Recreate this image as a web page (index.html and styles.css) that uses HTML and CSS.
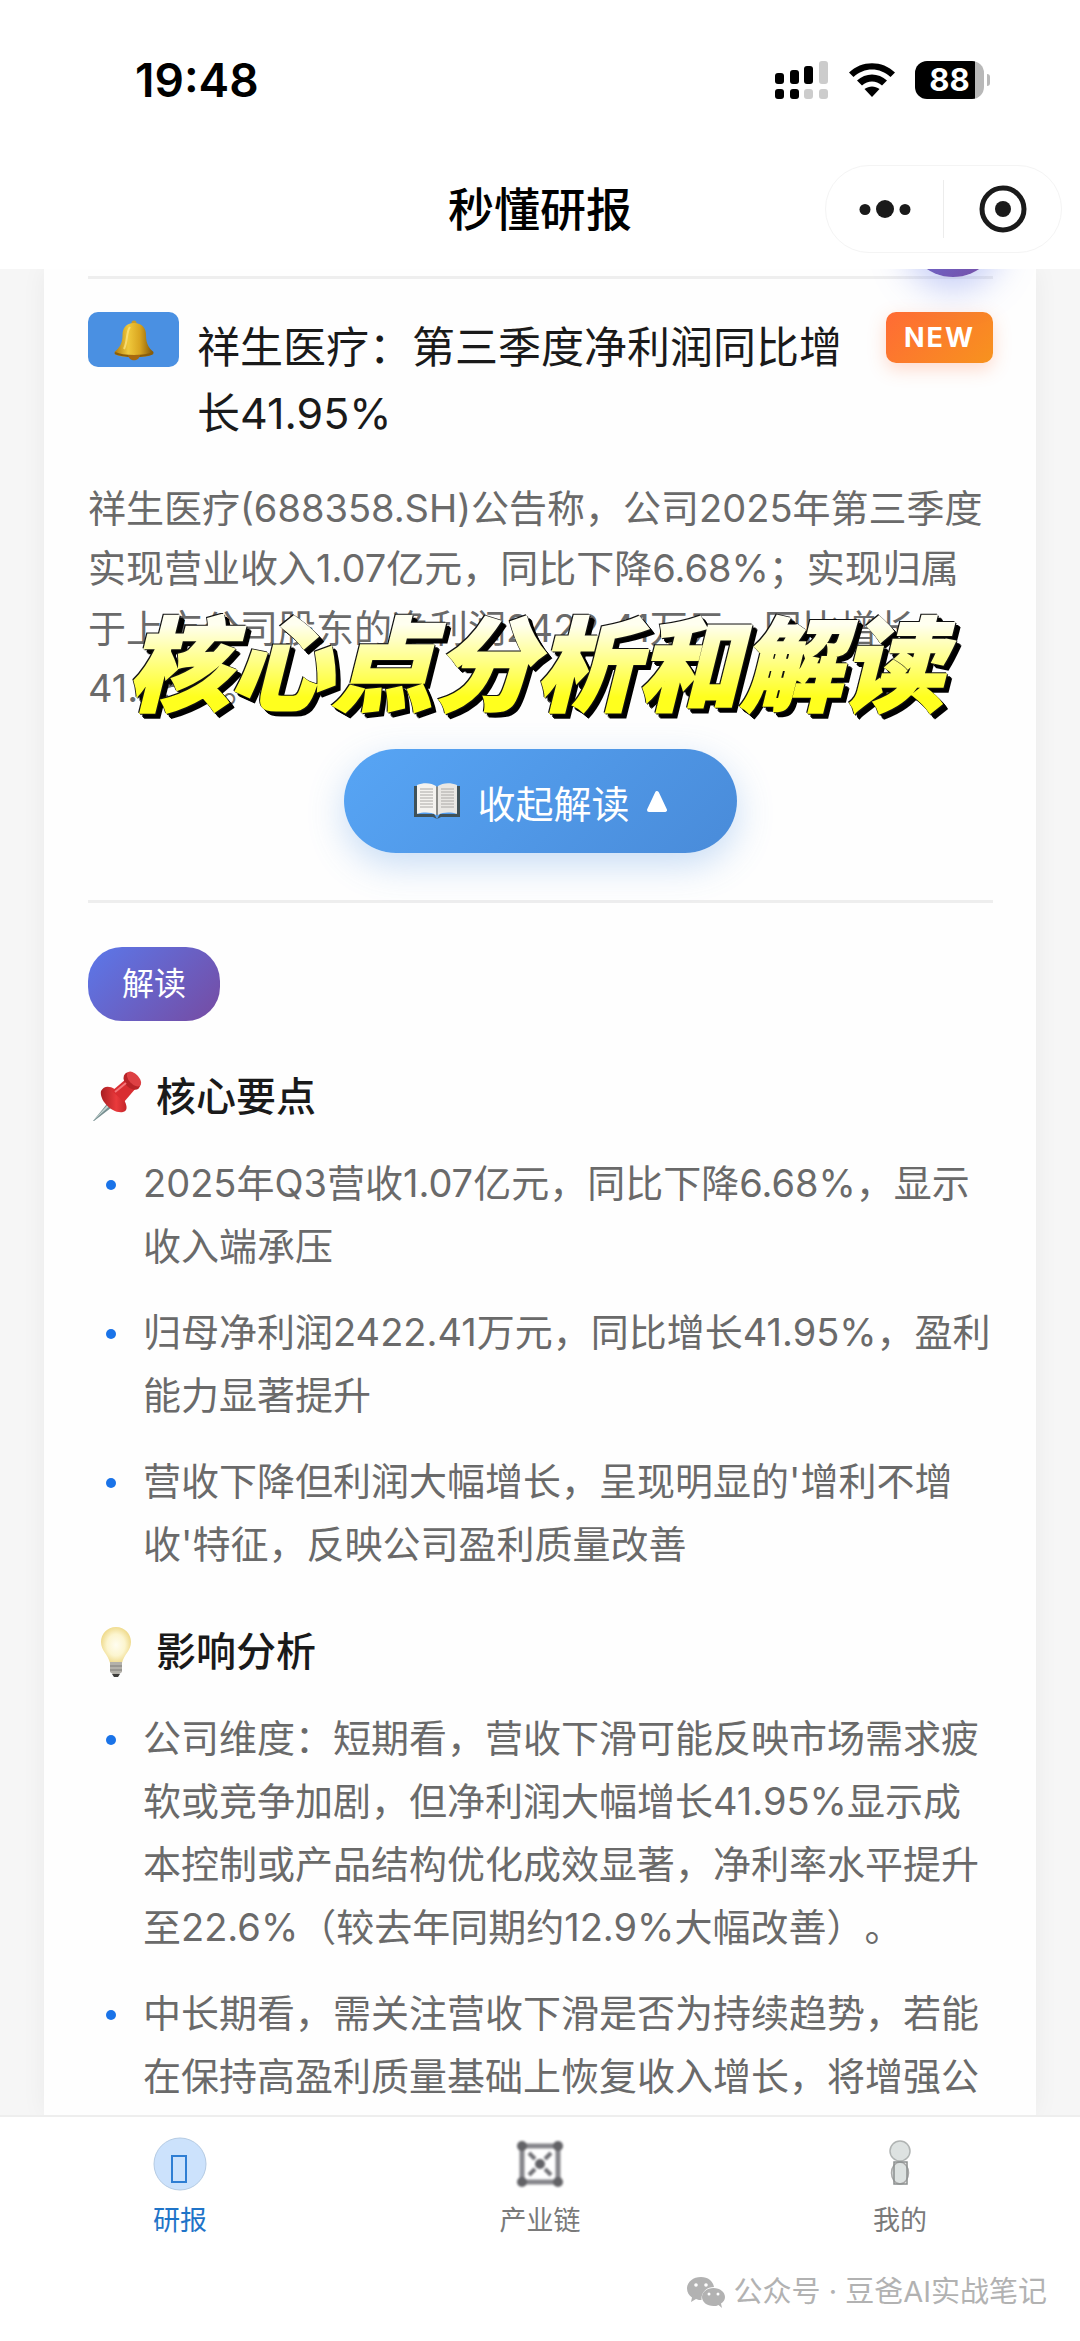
FILE: index.html
```html
<!DOCTYPE html>
<html lang="zh-CN">

<head>
    <meta charset="UTF-8">
    <meta name="viewport" content="width=device-width, initial-scale=1.0">
    <title>秒懂研报</title>
    <link rel="stylesheet" href="styles.css">
</head>

<body>
    <header class="app-header">
        <div class="status-bar">
            <span class="status-time">19:48</span>
            <div class="status-icons">
                <svg class="signal-icon" viewBox="0 0 54 38" width="54" height="38">
                    <g fill="#000">
                        <rect x="0" y="12" width="9" height="11" rx="3" />
                        <rect x="15" y="9" width="9" height="14" rx="3" />
                        <rect x="29" y="5" width="9" height="18" rx="3" />
                        <rect x="0" y="28" width="9" height="10" rx="3" />
                        <rect x="15" y="28" width="9" height="10" rx="3" />
                    </g>
                    <g fill="#ccc">
                        <rect x="44" y="0" width="9" height="23" rx="3" />
                        <rect x="29" y="28" width="9" height="10" rx="3" />
                        <rect x="44" y="28" width="9" height="10" rx="3" />
                    </g>
                </svg>
                <svg class="wifi-icon" viewBox="0 0 46 34" width="46" height="34">
                    <path d="M0 9.5C12.500-3 33.500-3 46 9.500L41.500 14C31 4 15 4 4.500 14Z" />
                    <path d="M8 17.500C16.500 9.500 29.500 9.500 38 17.500L33 22.500C27 17 19 17 13 22.500Z" />
                    <path d="M15.500 26C20 22.500 26 22.500 30.500 26L23 34Z" />
                </svg>
                <div class="battery"><span class="battery-body">88</span><span class="battery-cap"></span></div>
            </div>
        </div>
        <div class="nav-bar">
            <h1 class="nav-title">秒懂研报</h1>
            <div class="capsule">
                <button type="button" class="capsule-btn" aria-label="更多">
                    <svg viewBox="0 0 52 20" width="52" height="20">
                        <circle cx="6" cy="10.500" r="5.500" />
                        <circle cx="26" cy="10" r="9" />
                        <circle cx="46" cy="10.500" r="5.500" />
                    </svg>
                </button>
                <button type="button" class="capsule-btn capsule-close" aria-label="关闭">
                    <svg viewBox="0 0 48 48" width="48" height="48">
                        <circle cx="24" cy="24" r="21" fill="none" stroke="#1a1a1a" stroke-width="5" />
                        <circle cx="24" cy="24" r="8" />
                    </svg>
                </button>
            </div>
        </div>
    </header>

    <main class="content">
        <span class="float-button"></span>
        <div class="card">
            <article class="news-item">
                <div class="news-head">
                    <span class="bell-badge">
                        <svg viewBox="0 0 42 42" width="42" height="42">
                            <defs>
                                <linearGradient id="bellGold" x1="0" x2="1">
                                    <stop offset="0" stop-color="#b07a0c" />
                                    <stop offset="0.35" stop-color="#f0c93c" />
                                    <stop offset="0.65" stop-color="#d9a520" />
                                    <stop offset="1" stop-color="#7d5306" />
                                </linearGradient>
                            </defs>
                            <circle cx="21" cy="4" r="2.500" fill="#c89a26" />
                            <path d="M21 4C13 4 9.500 9 9.500 16C9.500 25 6 29 1.500 33C1 37 9 38 21 38S41 37 40.500 33C36 29 33 25 33 16C33 9 29 4 21 4Z" fill="url(#bellGold)" />
                            <path d="M2 34C10 38 32 38 40 34" fill="none" stroke="#8a5d0a" stroke-width="2" />
                            <path d="M15 36C16 43 26 43 27 36Z" fill="#a8680f" />
                            <path d="M17 8C13 13 15 22 11 30" fill="none" stroke="#ffe887" stroke-width="2" opacity="0.7" />
                        </svg>
                    </span>
                    <h2 class="news-title">祥生医疗：第三季度净利润同比增长41.95%</h2>
                    <span class="new-badge">NEW</span>
                </div>
                <div class="summary">
                    <p class="summary-text">祥生医疗(688358.SH)公告称，公司2025年第三季度实现营业收入1.07亿元，同比下降6.68%；实现归属于上市公司股东的净利润2422.41万元，同比增长41.95%。</p>
                    <div class="caption">核心点分析和解读</div>
                </div>
                <button type="button" class="toggle-button">
                    <svg viewBox="0 0 46 36" width="46" height="36">
                        <path d="M0 3H4V31H20L23 36L26 31H42V3H46V34H27L23 36L19 34H0Z" fill="#3f5158" />
                        <path d="M3 2C10-1 18 0 22 3V32C17 29 9 29 3 31Z" fill="#f5f3ef" />
                        <path d="M43 2C36-1 28 0 24 3V32C29 29 37 29 43 31Z" fill="#e9e7e3" />
                        <path d="M22 3L23 4L24 3V32H22Z" fill="#8c8c88" />
                        <g stroke="#aaa8a5" stroke-width="1">
                            <path d="M6 6H19M6 9H19M6 12H19M6 15H19M6 18H19M6 21H19M6 24H19M27 6H40M27 9H40M27 12H40M27 15H40M27 18H40M27 21H40M27 24H40" />
                        </g>
                    </svg>
                    <span>收起解读</span>
                    <svg class="toggle-arrow" viewBox="0 0 20 22" width="20" height="22">
                        <path d="M10 3L18 20H2Z" fill="#fff" stroke="#fff" stroke-width="4" stroke-linejoin="round" />
                    </svg>
                </button>
            </article>

            <section class="analysis">
                <span class="tag">解读</span>

                <h3 class="section-title">
                    <svg viewBox="0 0 56 56" width="56" height="56">
                        <defs>
                            <linearGradient id="pinRed" x1="0" x2="1">
                                <stop offset="0" stop-color="#a81e22" />
                                <stop offset="0.6" stop-color="#ea3a3c" />
                                <stop offset="1" stop-color="#c4252a" />
                            </linearGradient>
                        </defs>
                        <path d="M5 52L23 30L28 35L6 52Z" fill="#758d8f" />
                        <path d="M5 52L24 31L26 33Z" fill="#c5d5d2" />
                        <path d="M13 22C17 14 27 18 33 26S41 42 35 43C24 45 11 31 13 22Z" fill="url(#pinRed)" />
                        <path d="M24 22L38 10L48 19L36 33Z" fill="#d92d31" />
                        <ellipse cx="44" cy="12" rx="10" ry="7" transform="rotate(48 44 12)" fill="#b82327" />
                        <ellipse cx="46" cy="10" rx="9" ry="5" transform="rotate(48 46 10)" fill="#dd4043" />
                        <path d="M27 23L38 14" stroke="#f4767a" stroke-width="2" />
                    </svg>
                    核心要点
                </h3>
                <ul class="point-list">
                    <li>2025年Q3营收1.07亿元，同比下降6.68%，显示收入端承压</li>
                    <li>归母净利润2422.41万元，同比增长41.95%，盈利能力显著提升</li>
                    <li>营收下降但利润大幅增长，呈现明显的'增利不增收'特征，反映公司盈利质量改善</li>
                </ul>

                <h3 class="section-title">
                    <svg viewBox="0 0 56 56" width="56" height="56">
                        <defs>
                            <radialGradient id="bulbGlow">
                                <stop offset="0" stop-color="#fffdf0" />
                                <stop offset="0.6" stop-color="#fcf5cf" />
                                <stop offset="1" stop-color="#f0dc90" />
                            </radialGradient>
                        </defs>
                        <path d="M28 3C19 3 13 10 13 18C13 27 20 30 22 39H34C36 30 43 27 43 18C43 10 37 3 28 3Z" fill="url(#bulbGlow)" />
                        <path d="M22 38H34V48L30 51H26L22 48Z" fill="#b3b1aa" />
                        <path d="M22 42H34M22 46H34" stroke="#7f7d78" stroke-width="1" />
                        <path d="M24 50H32L30 53H26Z" fill="#3c3c3a" />
                    </svg>
                    影响分析
                </h3>
                <ul class="point-list">
                    <li>公司维度：短期看，营收下滑可能反映市场需求疲软或竞争加剧，但净利润大幅增长41.95%显示成本控制或产品结构优化成效显著，净利率水平提升至22.6%（较去年同期约12.9%大幅改善）。</li>
                    <li>中长期看，需关注营收下滑是否为持续趋势，若能在保持高盈利质量基础上恢复收入增长，将增强公</li>
                </ul>
            </section>
        </div>
    </main>

    <footer class="bottom-bar">
        <nav class="tab-bar">
            <a href="#" class="tab active">
                <svg viewBox="0 0 54 54" width="54" height="54">
                    <circle cx="27" cy="27" r="26" fill="#cce2fc" stroke="#b5cbe3" stroke-width="1" />
                    <rect x="19" y="19" width="14" height="26" fill="none" stroke="#2f7ed3" stroke-width="2" />
                </svg>
                <span>研报</span>
            </a>
            <a href="#" class="tab">
                <svg viewBox="0 0 54 54" width="54" height="54" class="chain-icon">
                    <rect x="9" y="9" width="36" height="36" fill="none" stroke="#85858a" stroke-width="5" />
                    <g fill="#626266">
                        <circle cx="9" cy="9" r="5" />
                        <circle cx="45" cy="9" r="5" />
                        <circle cx="9" cy="45" r="5" />
                        <circle cx="45" cy="45" r="5" />
                        <circle cx="27" cy="27" r="5" />
                    </g>
                    <path d="M16 16L22 22M38 16L32 22M16 38L22 32M38 38L32 32" stroke="#707075" stroke-width="4" />
                </svg>
                <span>产业链</span>
            </a>
            <a href="#" class="tab">
                <svg viewBox="0 0 54 54" width="54" height="54">
                    <circle cx="27" cy="14" r="10" fill="#dde2e1" stroke="#b0b4b3" stroke-width="1.500" />
                    <ellipse cx="27" cy="36" rx="8.500" ry="11" fill="#dde2e1" stroke="#aaa" stroke-width="1.500" />
                    <rect x="21" y="25" width="13" height="22" fill="none" stroke="#8b8f8e" stroke-width="1.500" />
                </svg>
                <span>我的</span>
            </a>
        </nav>
        <div class="account">
            <svg viewBox="0 0 38 31" width="38" height="31">
                <path d="M14 0C6 0 0 5 0 11.500C0 15.500 2 18.500 5 20.500L4 25L9 22C11 23 13 23 14.500 23C14 15 20 10 27 10C26 4 21 0 14 0Z" fill="#b2b2b2" />
                <path d="M26.500 11C20 11 15 15 15 20S20 29 26.500 29C28.500 29 30 29 31.500 28L35 31L34 26.500C36.500 25 38 23 38 20C38 15 33 11 26.500 11Z" fill="#b2b2b2" />
                <g fill="#fff">
                    <circle cx="9" cy="8" r="1.800" />
                    <circle cx="19" cy="8" r="1.800" />
                    <circle cx="22" cy="17" r="1.500" />
                    <circle cx="31" cy="17" r="1.500" />
                </g>
            </svg>
            <span>公众号 · 豆爸AI实战笔记</span>
        </div>
    </footer>
</body>

</html>
```
FILE: styles.css
```css
:root {
    --ink: #1a1a1a;
    --text: #6a6a6a;
    --line: #eeeeee;
    --blue: #1a73e8;
    --page: #f6f6f6;
}

* {
    margin: 0;
    padding: 0;
    box-sizing: border-box;
}

body {
    display: flex;
    flex-direction: column;
    height: 100vh;
    background: var(--page);
    color: var(--text);
    font-family: Inter, 'Noto Sans CJK SC', sans-serif;
    text-spacing-trim: space-all;
    overflow: hidden;
}

svg {
    display: block;
    flex-shrink: 0;
}

button {
    font-family: inherit;
    border: none;
    background: none;
    cursor: pointer;
}

/* Status bar and title */
.app-header {
    flex-shrink: 0;
    background: #fff;
    padding-bottom: 16px;
}

.status-bar {
    display: flex;
    justify-content: space-between;
    align-items: center;
    height: 165px;
    padding: 0 90px 5px 135px;
}

.status-time {
    color: #000;
    font-size: 46px;
    font-weight: 600;
}

.status-icons {
    display: flex;
    align-items: center;
    gap: 20px;
}

.battery {
    display: flex;
    align-items: center;
    gap: 3px;
}

.battery-body {
    width: 69px;
    height: 38px;
    border-radius: 12px;
    background: linear-gradient(to right, #000 60px, #b8b8b8 60px);
    color: #fff;
    font-size: 31px;
    font-weight: 700;
    line-height: 38px;
    text-align: center;
}

.battery-cap {
    width: 3px;
    height: 12px;
    border-radius: 0 3px 3px 0;
    background: #b8b8b8;
}

.nav-bar {
    display: grid;
    grid-template-columns: 1fr auto 1fr;
    align-items: center;
    height: 88px;
    padding: 0 18px;
}

.nav-title {
    grid-column: 2;
    color: #000;
    font-size: 46px;
    font-weight: 500;
    line-height: 60px;
}

.capsule {
    justify-self: end;
    display: flex;
    align-items: center;
    width: 237px;
    height: 88px;
    border: 1px solid #f4f4f4;
    border-radius: 44px;
}

.capsule-btn {
    flex: 1;
    display: flex;
    align-items: center;
    justify-content: center;
    height: 58px;
    fill: var(--ink);
}

.capsule-close {
    border-left: 1px solid #ececec;
}

/* Scrolling card */
.content {
    position: relative;
    flex: 1;
    min-height: 0;
    display: flex;
    padding: 0 44px;
    overflow: hidden;
}

.float-button {
    position: absolute;
    z-index: 1;
    top: -86px;
    right: 80px;
    width: 94px;
    height: 94px;
    border-radius: 50%;
    background: linear-gradient(135deg, #667eea, #764ba2);
    box-shadow: 0 12px 36px rgba(102, 126, 234, 0.4);
}

.card {
    flex: 1;
    min-width: 0;
    padding: 7px 43px 0 44px;
    background: #fefefe;
    box-shadow: 0 0 24px rgba(0, 0, 0, 0.05);
}

.news-item {
    display: flex;
    flex-direction: column;
    padding-bottom: 47px;
    border-top: 3px solid var(--line);
    border-bottom: 3px solid var(--line);
}

.news-head {
    display: flex;
    align-items: flex-start;
    gap: 18px;
    padding-top: 33px;
}

.bell-badge {
    display: flex;
    align-items: center;
    justify-content: center;
    width: 91px;
    height: 55px;
    border-radius: 10px;
    background: #4a90e2;
}

.news-title {
    flex: 1;
    padding-top: 2px;
    color: var(--ink);
    font-size: 43px;
    font-weight: 400;
    line-height: 66px;
}

.new-badge {
    padding: 0 18px;
    border-radius: 10px;
    background: linear-gradient(135deg, #ff6b35, #f7931e);
    box-shadow: 0 6px 18px rgba(255, 107, 53, 0.25);
    color: #fff;
    font-size: 27px;
    font-weight: 700;
    line-height: 51px;
    letter-spacing: 2px;
}

.summary {
    position: relative;
    margin-top: 32px;
}

.summary-text {
    font-size: 38px;
    line-height: 60px;
}

/* Highlight caption laid over the summary */
.caption {
    position: absolute;
    left: 50%;
    bottom: 0;
    transform: translateX(-50%);
    padding: 0 22px 0 12px;
    white-space: nowrap;
    font-size: 102px;
    font-style: italic;
    font-weight: 900;
    line-height: 104px;
    color: transparent;
    background: linear-gradient(#fffff0 10%, #ffff1e 80%);
    background-clip: text;
    -webkit-background-clip: text;
    -webkit-text-stroke: 2px transparent;
    filter: drop-shadow(1px 1px 0 #111) drop-shadow(-1px -1px 0 #111) drop-shadow(4px 4px 0 #000);
}

.toggle-button {
    align-self: center;
    display: flex;
    align-items: center;
    gap: 17px;
    height: 104px;
    margin-top: 31px;
    padding: 0 70px;
    border-radius: 52px;
    background: linear-gradient(135deg, #57a5f5, #498bd9);
    box-shadow: 0 12px 36px rgba(74, 144, 226, 0.3);
    color: #fff;
    font-size: 38px;
}

.tag {
    display: inline-block;
    padding: 0 34px;
    border-radius: 34px;
    background: linear-gradient(135deg, #5b78ea, #764ba2);
    color: #fff;
    font-size: 32px;
    line-height: 74px;
    vertical-align: top;
}

.analysis {
    padding-top: 44px;
}

.section-title {
    display: flex;
    align-items: center;
    gap: 12px;
    margin: 46px 0 25px;
    color: var(--ink);
    font-size: 40px;
    font-weight: 500;
    line-height: 60px;
}

.point-list {
    display: flex;
    flex-direction: column;
    gap: 23px;
    list-style: none;
}

.point-list li {
    position: relative;
    padding-left: 55px;
    font-size: 38px;
    line-height: 63px;
}

.point-list li::before {
    content: '';
    position: absolute;
    left: 18px;
    top: 28px;
    width: 10px;
    height: 10px;
    border-radius: 50%;
    background: var(--blue);
}

/* Tabs */
.bottom-bar {
    flex-shrink: 0;
    padding-bottom: 29px;
    border-top: 2px solid var(--line);
    background: #fff;
}

.tab-bar {
    display: flex;
    padding-top: 20px;
}

.tab {
    flex: 1;
    display: flex;
    flex-direction: column;
    align-items: center;
    gap: 10px;
    color: #7a7a7a;
    font-size: 27px;
    line-height: 40px;
    text-decoration: none;
}

.tab.active {
    color: #1f74c8;
}

.chain-icon {
    filter: blur(1px);
}

.account {
    display: flex;
    align-items: center;
    justify-content: flex-end;
    gap: 9px;
    margin-top: 31px;
    padding-right: 33px;
    color: #b2b2b2;
    font-size: 29px;
    line-height: 40px;
}
```
